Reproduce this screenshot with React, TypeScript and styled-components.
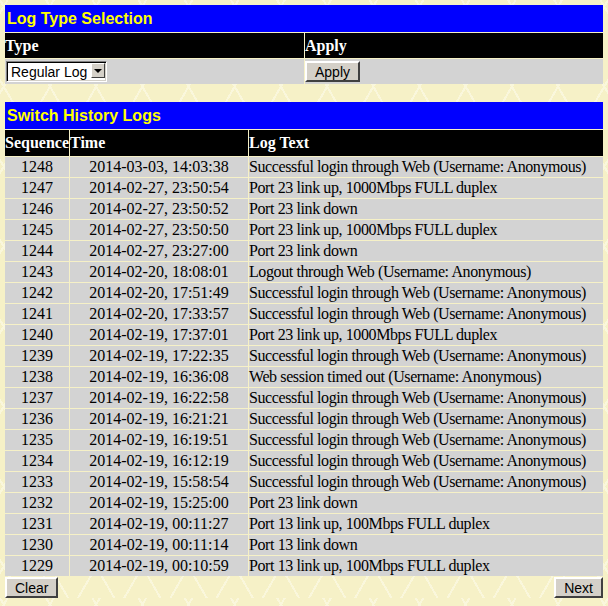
import styled, { createGlobalStyle } from "styled-components";

const GlobalStyle = createGlobalStyle`
	html, body {
		margin: 0;
		padding: 0;
	}
	body {
		background-color: #f6f1c7;
		background-image:
			repeating-linear-gradient(60deg, transparent 0 18px, #faf7dc 18px 20px, transparent 20px 40px),
			repeating-linear-gradient(-60deg, transparent 0 18px, #faf7dc 18px 20px, transparent 20px 40px);
		font-family: "Liberation Serif", "Times New Roman", serif;
	}
`;

const StyledPage = styled.div`
	padding: 5px 5px 0 5px;
	width: 598px;
`;

const StyledSection = styled.div`
	margin-bottom: 18px;
`;

const StyledTitle = styled.div`
	height: 27px;
	line-height: 27px;
	padding-left: 2px;
	background-color: #0000ff;
	color: #ffff00;
	font-family: "Liberation Sans", Arial, sans-serif;
	font-weight: bold;
	font-size: 16px;
`;

const StyledTable = styled.table`
	width: 100%;
	border-collapse: collapse;
	table-layout: auto;
`;

const StyledTh = styled.th<{ $width?: string; $height?: string }>`
	background-color: #000000;
	color: #ffffff;
	font-family: "Liberation Serif", "Times New Roman", serif;
	font-weight: bold;
	font-size: 16px;
	text-align: left;
	height: ${(p) => p.$height || "25px"};
	padding: 0;
	border-top: 1px solid #f6f1c7;
	width: ${(p) => p.$width || "auto"};
	white-space: nowrap;
	& + & {
		border-left: 1px solid #f6f1c7;
	}
`;

const StyledTd = styled.td<{ $align?: string; $tall?: boolean; $tight?: boolean }>`
	background-color: #d3d3d3;
	color: #000000;
	font-size: 16px;
	height: ${(p) => (p.$tall ? "25px" : "20px")};
	padding: 0;
	text-align: ${(p) => p.$align || "left"};
	letter-spacing: ${(p) => (p.$tight ? "-0.4px" : "normal")};
	border-top: 1px solid #f6f1c7;
	white-space: nowrap;
	& + & {
		border-left: 1px solid #f6f1c7;
	}
`;

const StyledSelectWrap = styled.span`
	position: relative;
	display: inline-block;
	margin-left: 1px;
	vertical-align: middle;
`;

const StyledSelect = styled.select`
	appearance: none;
	-webkit-appearance: none;
	display: block;
	width: 101px;
	height: 21px;
	padding: 0 0 0 4px;
	font-family: "Liberation Sans", Arial, sans-serif;
	font-size: 14px;
	color: #000000;
	background: #ffffff;
	border: 1px solid;
	border-color: #808080 #ffffff #ffffff #808080;
	border-radius: 0;
	box-shadow: inset 1px 1px 0 #000000, inset -1px -1px 0 #d4d0c8;
`;

const StyledArrow = styled.span`
	position: absolute;
	top: 2px;
	right: 2px;
	width: 14px;
	height: 15px;
	box-sizing: border-box;
	background-color: #d4d0c8;
	border: 1px solid;
	border-color: #ffffff #404040 #404040 #ffffff;
	pointer-events: none;
	display: flex;
	align-items: center;
	justify-content: center;
	&::after {
		content: "";
		border-left: 4px solid transparent;
		border-right: 4px solid transparent;
		border-top: 4px solid #000000;
		margin-top: 1px;
	}
`;

const StyledButton = styled.button`
	height: 21px;
	padding: 0 8px;
	font-family: "Liberation Sans", Arial, sans-serif;
	font-size: 14px;
	color: #000000;
	background-color: #d4d0c8;
	border: 2px solid;
	border-color: #ffffff #404040 #404040 #ffffff;
	cursor: pointer;
`;

const StyledFooter = styled.div`
	display: flex;
	justify-content: space-between;
	margin-top: 1px;
`;

const logs: [number, string, string][] = [
	[1248, "2014-03-03, 14:03:38", "Successful login through Web (Username: Anonymous)"],
	[1247, "2014-02-27, 23:50:54", "Port 23 link up, 1000Mbps FULL duplex"],
	[1246, "2014-02-27, 23:50:52", "Port 23 link down"],
	[1245, "2014-02-27, 23:50:50", "Port 23 link up, 1000Mbps FULL duplex"],
	[1244, "2014-02-27, 23:27:00", "Port 23 link down"],
	[1243, "2014-02-20, 18:08:01", "Logout through Web (Username: Anonymous)"],
	[1242, "2014-02-20, 17:51:49", "Successful login through Web (Username: Anonymous)"],
	[1241, "2014-02-20, 17:33:57", "Successful login through Web (Username: Anonymous)"],
	[1240, "2014-02-19, 17:37:01", "Port 23 link up, 1000Mbps FULL duplex"],
	[1239, "2014-02-19, 17:22:35", "Successful login through Web (Username: Anonymous)"],
	[1238, "2014-02-19, 16:36:08", "Web session timed out (Username: Anonymous)"],
	[1237, "2014-02-19, 16:22:58", "Successful login through Web (Username: Anonymous)"],
	[1236, "2014-02-19, 16:21:21", "Successful login through Web (Username: Anonymous)"],
	[1235, "2014-02-19, 16:19:51", "Successful login through Web (Username: Anonymous)"],
	[1234, "2014-02-19, 16:12:19", "Successful login through Web (Username: Anonymous)"],
	[1233, "2014-02-19, 15:58:54", "Successful login through Web (Username: Anonymous)"],
	[1232, "2014-02-19, 15:25:00", "Port 23 link down"],
	[1231, "2014-02-19, 00:11:27", "Port 13 link up, 100Mbps FULL duplex"],
	[1230, "2014-02-19, 00:11:14", "Port 13 link down"],
	[1229, "2014-02-19, 00:10:59", "Port 13 link up, 100Mbps FULL duplex"],
];

const App = () => {
	return (
		<>
			<GlobalStyle />
			<StyledPage>
				<StyledSection>
					<StyledTitle>Log Type Selection</StyledTitle>
					<StyledTable>
						<thead>
							<tr>
								<StyledTh $width="299px">Type</StyledTh>
								<StyledTh>Apply</StyledTh>
							</tr>
						</thead>
						<tbody>
							<tr>
								<StyledTd $tall>
									<StyledSelectWrap>
										<StyledSelect defaultValue="regular">
											<option value="regular">Regular Log</option>
											<option value="attack">Attack Log</option>
										</StyledSelect>
										<StyledArrow />
									</StyledSelectWrap>
								</StyledTd>
								<StyledTd $tall>
									<StyledButton>Apply</StyledButton>
								</StyledTd>
							</tr>
						</tbody>
					</StyledTable>
				</StyledSection>

				<StyledTitle>Switch History Logs</StyledTitle>
				<StyledTable>
					<thead>
						<tr>
							<StyledTh $width="64px" $height="26px">Sequence</StyledTh>
							<StyledTh $width="178px" $height="26px">Time</StyledTh>
							<StyledTh $height="26px">Log Text</StyledTh>
						</tr>
					</thead>
					<tbody>
						{logs.map(([seq, time, text]) => (
							<tr key={seq}>
								<StyledTd $align="center">{seq}</StyledTd>
								<StyledTd $align="center">{time}</StyledTd>
								<StyledTd $tight>{text}</StyledTd>
							</tr>
						))}
					</tbody>
				</StyledTable>
				<StyledFooter>
					<StyledButton>Clear</StyledButton>
					<StyledButton>Next</StyledButton>
				</StyledFooter>
			</StyledPage>
		</>
	);
};

export default App;
